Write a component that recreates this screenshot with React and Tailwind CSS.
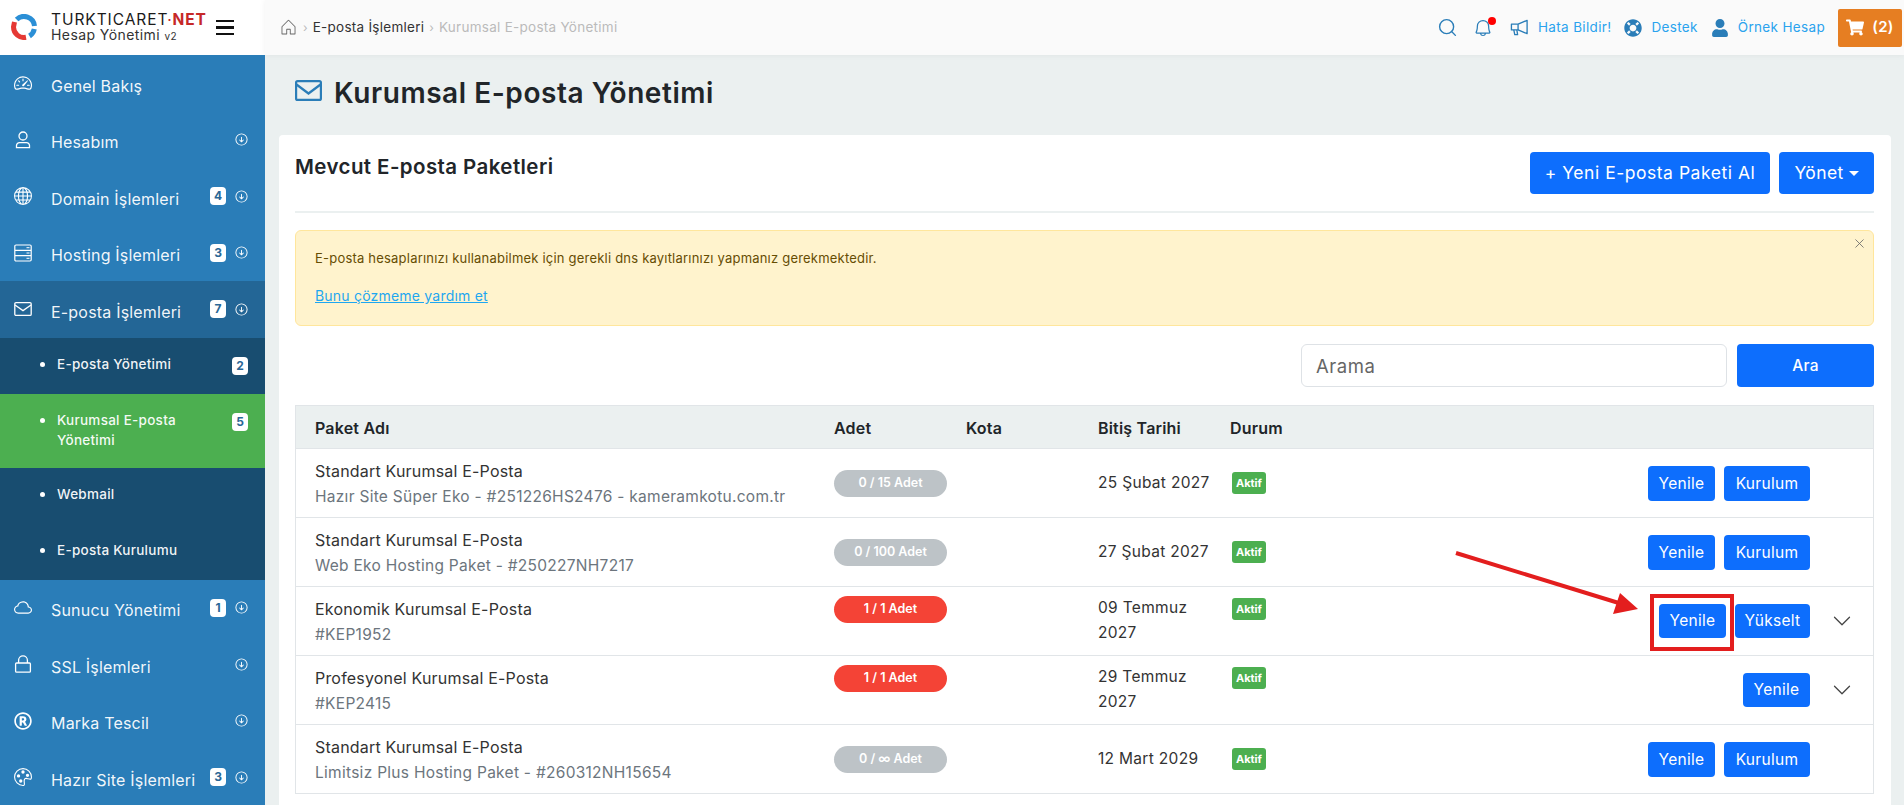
import { Search, ChevronDown, X } from 'lucide-react'
import { FaLifeRing, FaUser, FaShoppingCart, FaRegRegistered } from 'react-icons/fa'
import { BsSpeedometer2, BsGlobe, BsCloud, BsPalette } from 'react-icons/bs'
import { PiArrowCircleDown, PiHouseLight, PiBell } from 'react-icons/pi'

function UserOutline({ className }) {
  return (
    <svg viewBox="0 0 18 18" fill="none" stroke="currentColor" strokeWidth="1.3" className={className}>
      <circle cx="9" cy="5" r="4" />
      <path d="M2.5 16.6v-2a3 3 0 0 1 3-3h7a3 3 0 0 1 3 3v2z" />
    </svg>
  )
}

function Server({ className }) {
  return (
    <svg viewBox="0 0 18 18" fill="none" stroke="currentColor" strokeWidth="1.2" className={className}>
      <rect x="0.8" y="1" width="16.4" height="16" rx="1.2" />
      <path d="M1 6.3h16M1 11.7h16" />
      <path d="M12.5 3.7h3M12.5 9h3M12.5 14.3h3" strokeWidth="1" />
    </svg>
  )
}

function Envelope({ className }) {
  return (
    <svg viewBox="0 0 18 18" fill="none" stroke="currentColor" strokeWidth="1.3" className={className}>
      <rect x="0.8" y="2.6" width="16.4" height="12.8" rx="1.2" />
      <path d="M1 5 9 10.6 17 5" />
    </svg>
  )
}

function Lock({ className }) {
  return (
    <svg viewBox="0 0 18 18" fill="none" stroke="currentColor" strokeWidth="1.3" className={className}>
      <rect x="1.6" y="8" width="14.8" height="9.2" rx="1" />
      <path d="M4.6 8V5.2a4.4 4.4 0 0 1 8.8 0V8" />
    </svg>
  )
}

function Megaphone({ className }) {
  return (
    <svg viewBox="0 0 20 20" fill="none" stroke="currentColor" strokeWidth="1.4" strokeLinejoin="round" className={className}>
      <path d="M1.5 6.5h7L18 2.5v14l-9.5-4h-7z" />
      <path d="M8.5 6.5v6M4 12.5l1 5h3l-.8-5" />
    </svg>
  )
}

const menuTop = [
  { label: 'Genel Bakış', icon: BsSpeedometer2, arrow: false },
  { label: 'Hesabım', icon: UserOutline, arrow: true },
  { label: 'Domain İşlemleri', icon: BsGlobe, badge: 4, arrow: true },
  { label: 'Hosting İşlemleri', icon: Server, badge: 3, arrow: true },
]
const menuBottom = [
  { label: 'Sunucu Yönetimi', icon: BsCloud, badge: 1, arrow: true },
  { label: 'SSL İşlemleri', icon: Lock, arrow: true },
  { label: 'Marka Tescil', icon: FaRegRegistered, arrow: true },
  { label: 'Hazır Site İşlemleri', icon: BsPalette, badge: 3, arrow: true },
]

const rows = [
  { name: 'Standart Kurumsal E-Posta', sub: 'Hazır Site Süper Eko - #251226HS2476 - kameramkotu.com.tr', count: '0 / 15 Adet', date: '25 Şubat 2027', btns: ['Yenile', 'Kurulum'] },
  { name: 'Standart Kurumsal E-Posta', sub: 'Web Eko Hosting Paket - #250227NH7217', count: '0 / 100 Adet', date: '27 Şubat 2027', btns: ['Yenile', 'Kurulum'] },
  { name: 'Ekonomik Kurumsal E-Posta', sub: '#KEP1952', count: '1 / 1 Adet', full: true, date: '09 Temmuz 2027', btns: ['Yenile', 'Yükselt'], more: true },
  { name: 'Profesyonel Kurumsal E-Posta', sub: '#KEP2415', count: '1 / 1 Adet', full: true, date: '29 Temmuz 2027', btns: ['Yenile'], more: true },
  { name: 'Standart Kurumsal E-Posta', sub: 'Limitsiz Plus Hosting Paket - #260312NH15654', count: '0 / ∞ Adet', date: '12 Mart 2029', btns: ['Yenile', 'Kurulum'] },
]

function MenuItem({ item, active }) {
  const Icon = item.icon
  return (
    <div className={`h-[56.5px] flex items-center pl-[14px] pr-[16px] text-white ${active ? 'bg-[#236696]' : ''}`}>
      <span className="w-[18px] flex justify-center">
        <Icon className="w-[18px] h-[18px]" />
      </span>
      <span className="ml-[19px] flex-1 pt-[5px] text-[16px] tracking-[0.012em] text-white/95">{item.label}</span>
      {item.badge && (
        <span className="w-[16px] h-[18px] mr-[8px] rounded-[4px] bg-white flex items-center justify-center text-[12px] font-bold text-[#2a6796]">
          {item.badge}
        </span>
      )}
      {item.arrow && <PiArrowCircleDown className="w-[15px] h-[15px]" />}
    </div>
  )
}

function SubItem({ label, badge, tall }) {
  return (
    <div className={`${tall ? 'h-[74px] bg-[#4caf50]' : 'h-[56px]'} flex items-start pl-[40px] pr-[17px] pt-[16px] text-white`}>
      <span className="w-[5px] h-[5px] rounded-full bg-white mt-[8px] shrink-0" />
      <span className="ml-[12px] flex-1 text-[13.5px] leading-[20px] tracking-[0.02em] font-medium text-white/95">{label}</span>
      {badge && (
        <span className="w-[16px] h-[18px] mt-[3px] rounded-[4px] bg-white flex items-center justify-center text-[12px] font-bold text-[#2a6796]">{badge}</span>
      )}
    </div>
  )
}

function Sidebar() {
  return (
    <aside className="w-[265px] shrink-0 bg-[#2a7db8] overflow-hidden">
      {menuTop.map(m => <MenuItem key={m.label} item={m} />)}
      <MenuItem item={{ label: 'E-posta İşlemleri', icon: Envelope, badge: 7, arrow: true }} active />
      <div className="bg-[#184d70]">
        <SubItem label="E-posta Yönetimi" badge={2} />
        <SubItem label="Kurumsal E-posta Yönetimi" badge={5} tall />
        <SubItem label="Webmail" />
        <SubItem label="E-posta Kurulumu" />
      </div>
      {menuBottom.map(m => <MenuItem key={m.label} item={m} />)}
    </aside>
  )
}

function Logo() {
  return (
    <div className="w-[265px] h-[55px] shrink-0 bg-white flex items-center pl-[10px]">
      <svg width="28" height="26" viewBox="0 0 28 26" className="shrink-0 -mt-[1px]">
        <path d="M6.6 5.6 A10.5 10.5 0 0 1 24.5 12" fill="none" stroke="#2b8fd6" strokeWidth="5" />
        <path d="M24.3 15 A10.5 10.5 0 0 1 19.5 22" fill="none" stroke="#2b8fd6" strokeWidth="5" />
        <path d="M16 23.3 A10.5 10.5 0 0 1 3.5 13 L4.5 8" fill="none" stroke="#e53935" strokeWidth="5" />
      </svg>
      <div className="ml-[13px] w-[165px] leading-none">
        <div className="text-[15.5px] leading-[16px] text-[#1a1a1a] tracking-[0.06em]">
          TURKTICARET<span className="text-[#c62828]">·</span><span className="font-bold text-[#c62828]">NET</span>
        </div>
        <div className="text-[14px] leading-[14px] text-[#333] tracking-[0.03em]">
          Hesap Yönetimi <span className="text-[10px]">v2</span>
        </div>
      </div>
      <div className="w-[18px] flex flex-col gap-[4px]">
        <span className="h-[2.5px] bg-[#111]" /><span className="h-[2.5px] bg-[#111]" /><span className="h-[2.5px] bg-[#111]" />
      </div>
    </div>
  )
}

function Topbar() {
  return (
    <div className="flex-1 h-[55px] bg-[#fafafa] flex items-center pl-[14px] pr-[2px] shadow-[0_0_6px_rgba(0,0,0,0.06)]">
      <PiHouseLight className="w-[19px] h-[19px] text-[#666]" />
      <span className="mx-[5px] text-[#bbb] text-[12px]">›</span>
      <span className="text-[13.5px] tracking-[0.02em] text-[#333]">E-posta İşlemleri</span>
      <span className="mx-[5px] text-[#bbb] text-[12px]">›</span>
      <span className="text-[13.5px] tracking-[0.02em] text-[#bbb]">Kurumsal E-posta Yönetimi</span>
      <div className="ml-auto flex items-center text-[13.5px] tracking-[0.025em] text-[#2aa3ee]">
        <Search className="w-[21px] h-[21px] text-[#2a7db8]" strokeWidth={1.6} />
        <span className="relative ml-[15px]">
          <PiBell className="w-[20px] h-[20px] text-[#2a7db8]" />
          <span className="absolute -top-[1px] -right-[3px] w-[8px] h-[8px] rounded-full bg-[#f00]" />
        </span>
        <Megaphone className="ml-[17px] w-[19px] h-[19px] text-[#2a7db8]" />
        <span className="ml-[9px]">Hata Bildir!</span>
        <FaLifeRing className="ml-[13px] w-[18px] h-[18px] text-[#2a7db8]" />
        <span className="ml-[9px]">Destek</span>
        <FaUser className="ml-[14px] w-[16px] h-[18px] text-[#2a7db8]" />
        <span className="ml-[10px]">Örnek Hesap</span>
        <div className="ml-[13px] w-[64px] h-[38px] rounded-[2px] bg-[#e67e22] flex items-center justify-center gap-[8px] text-white font-semibold text-[15px]">
          <FaShoppingCart className="w-[18px] h-[17px]" /> (2)
        </div>
      </div>
    </div>
  )
}

function Btn({ children, className = '' }) {
  return <button className={`rounded-[4px] bg-[#0d6efd] text-white tracking-[0.02em] flex items-center justify-center ${className}`}>{children}</button>
}

function TableRow({ r }) {
  const top = r.full
  return (
    <div className="grid grid-cols-[538px_132px_132px_132px_1fr] h-[69px] border-b border-[#e1e5e8]">
      <div className="pl-[19px] pt-[10px] leading-[25px]">
        <div className="text-[16px] tracking-[0.012em] text-[#333]">{r.name}</div>
        <div className="text-[15.5px] tracking-[0.018em] text-[#6c757d]">{r.sub}</div>
      </div>
      <div className={top ? 'pt-[9px]' : 'pt-[21px]'}>
        <span className={`w-[113px] h-[27px] rounded-full flex items-center justify-center text-white text-[12.5px] font-semibold ${r.full ? 'bg-[#f44336]' : 'bg-[#bdc3c7]'}`}>{r.count}</span>
      </div>
      <div />
      <div className={`text-[#333] text-[15.5px] leading-[25px] pr-[20px] tracking-[0.02em] ${top ? 'pt-[8px]' : 'pt-[21px]'}`}>{r.date}</div>
      <div className="flex items-start">
        <span className={`h-[22px] w-[34px] rounded-[3px] bg-[#4caf50] text-white text-[11px] font-bold flex items-center justify-center ml-[2px] ${top ? 'mt-[11px]' : 'mt-[23px]'}`}>Aktif</span>
        <div className="flex-1 flex gap-[9px] justify-end mt-[17px]">
          {r.btns.map(b => (
            <Btn key={b} className={`${top ? 'h-[34px]' : 'h-[35px]'} text-[15.5px] ${b === 'Kurulum' ? 'w-[86px]' : b === 'Yükselt' ? 'w-[75px]' : 'w-[67px]'}`}>{b}</Btn>
          ))}
        </div>
        <div className="w-[63px] flex justify-center mt-[19px]">
          {r.more && <ChevronDown className="w-[30px] h-[30px] text-[#444]" strokeWidth={1} />}
        </div>
      </div>
    </div>
  )
}

function Card() {
  return (
    <div className="bg-white rounded-[4px] pl-4 pr-[17px] pt-[17px] h-[700px]">
      <div className="flex items-start h-[61px] border-b-2 border-[#ebf0f0]">
        <h2 className="text-[20.5px] font-semibold tracking-[0.02em] text-[#212529] leading-[30px]">Mevcut E-posta Paketleri</h2>
        <Btn className="ml-auto w-[240px] h-[42px] text-[17.5px] tracking-[0.03em]">+ Yeni E-posta Paketi Al</Btn>
        <Btn className="ml-[9px] w-[95px] h-[42px] text-[17.5px] gap-[5px]">
          Yönet <span className="border-x-[5px] border-x-transparent border-t-[5px] border-t-white" />
        </Btn>
      </div>
      <div className="mt-[17px] relative h-[96px] rounded-[6px] border border-[#ffe69c] bg-[#fff3cd] text-[#664d03] px-[19px] pt-[17px]">
        <p className="text-[13px] tracking-[0.016em] leading-[20px]">E-posta hesaplarınızı kullanabilmek için gerekli dns kayıtlarınızı yapmanız gerekmektedir.</p>
        <a className="block mt-[18px] text-[14px] tracking-[0.015em] leading-[20px] text-[#1ea7f0] underline">Bunu çözmeme yardım et</a>
        <X className="absolute top-[5px] right-[6px] w-[15px] h-[15px] text-[#666]" strokeWidth={1.3} />
      </div>
      <div className="mt-[18px] flex gap-[10px]">
        <input placeholder="Arama" className="ml-auto w-[426px] h-[43px] rounded-[6px] border border-[#dee2e6] px-[14px] text-[18.5px] tracking-[0.03em] placeholder:text-[#666]" />
        <Btn className="w-[137px] h-[43px] text-[15.5px] font-medium">Ara</Btn>
      </div>
      <div className="mt-[18px] border-x border-t border-[#e1e5e8]">
        <div className="grid grid-cols-[538px_132px_132px_132px_1fr] h-[43px] items-center bg-[#ebf0f0] border-b border-[#e1e5e8] text-[16px] pt-[2px] font-semibold tracking-[0.012em] text-[#212529]">
          <div className="pl-[19px]">Paket Adı</div>
          <div>Adet</div>
          <div>Kota</div>
          <div>Bitiş Tarihi</div>
          <div>Durum</div>
        </div>
        {rows.map((r, i) => <TableRow key={i} r={r} />)}
      </div>
    </div>
  )
}

export default function App() {
  return (
    <div className="relative h-[805px] overflow-hidden bg-[#ebf0f0] font-[Inter,sans-serif]">
      <div className="flex">
        <Logo />
        <Topbar />
      </div>
      <div className="flex h-[750px]">
        <Sidebar />
        <main className="flex-1 min-w-0 pl-[14px] pr-[13px]">
          <div className="h-[80px] pl-[16px] pt-[25px] flex items-start gap-[12px]">
            <svg viewBox="0 0 27 21" fill="none" stroke="#2a7db8" strokeWidth="2.2" className="w-[27px] h-[21px] shrink-0">
              <rect x="1.1" y="1.1" width="24.8" height="18.8" rx="1.5" />
              <path d="M1.5 4.5 13.5 13.5 25.5 4.5" />
            </svg>
            <h1 className="text-[28px] leading-[40px] -mt-[7px] font-semibold tracking-[0.02em] text-[#212529]">Kurumsal E-posta Yönetimi</h1>
          </div>
          <Card />
        </main>
      </div>

      {/* Kırmızı işaretleme */}
      <div className="absolute left-[1650px] top-[594px] w-[84px] h-[57px] border-[4px] border-[#e31e1e]" />
      <svg className="absolute left-0 top-0 pointer-events-none" width="1904" height="805">
        <line x1="1456" y1="553" x2="1622" y2="604" stroke="#e31e1e" strokeWidth="4" />
        <polygon points="1638,609 1620,593 1613,614" fill="#e31e1e" />
      </svg>
    </div>
  )
}
